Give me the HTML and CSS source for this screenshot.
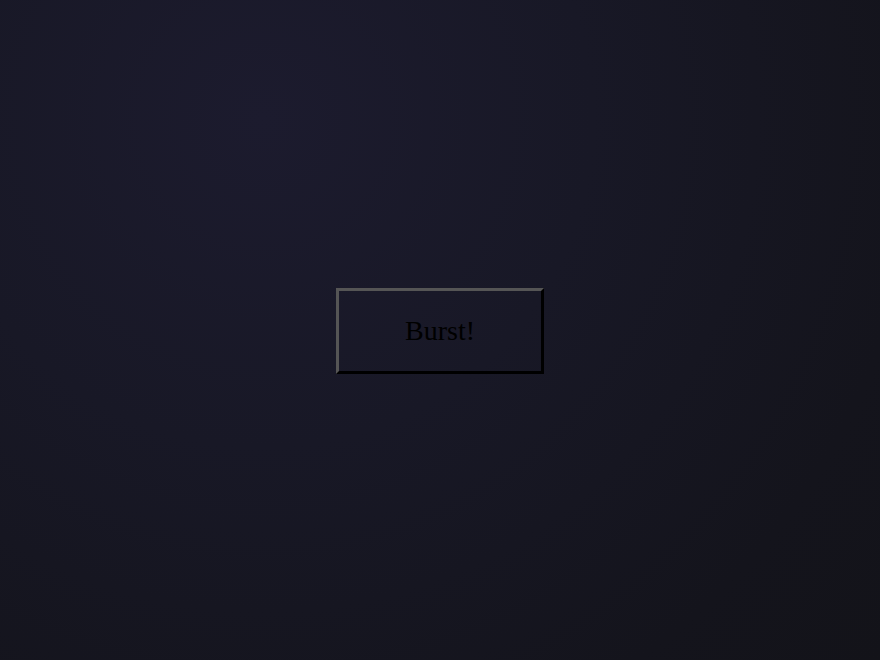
FILE: index.html
```html
<!DOCTYPE html>
<html>
<head>
<meta charset="utf-8">
<link rel="stylesheet" href="styles.css">
</head>
<body>
<main class="stage">
  <button class="burst">Burst!</button>
</main>
</body>
</html>
```

FILE: styles.css
```css
html, body {
  margin: 0;
  padding: 0;
  height: 100%;
}
body {
  background: radial-gradient(circle farthest-corner at 30% 18%, #1c1b2e 0%, #181826 40%, #14141c 80%, #131319 100%);
}
.stage {
  height: 100%;
  display: flex;
  align-items: center;
  justify-content: center;
}
.burst {
  box-sizing: border-box;
  width: 208px;
  height: 86px;
  margin-top: 2px;
  background: transparent;
  border-width: 3px;
  border-style: solid;
  border-color: #555555 #000000 #000000 #555555;
  font-family: "Liberation Serif", serif;
  font-size: 28px;
  color: #000;
  padding: 0;
}
```
